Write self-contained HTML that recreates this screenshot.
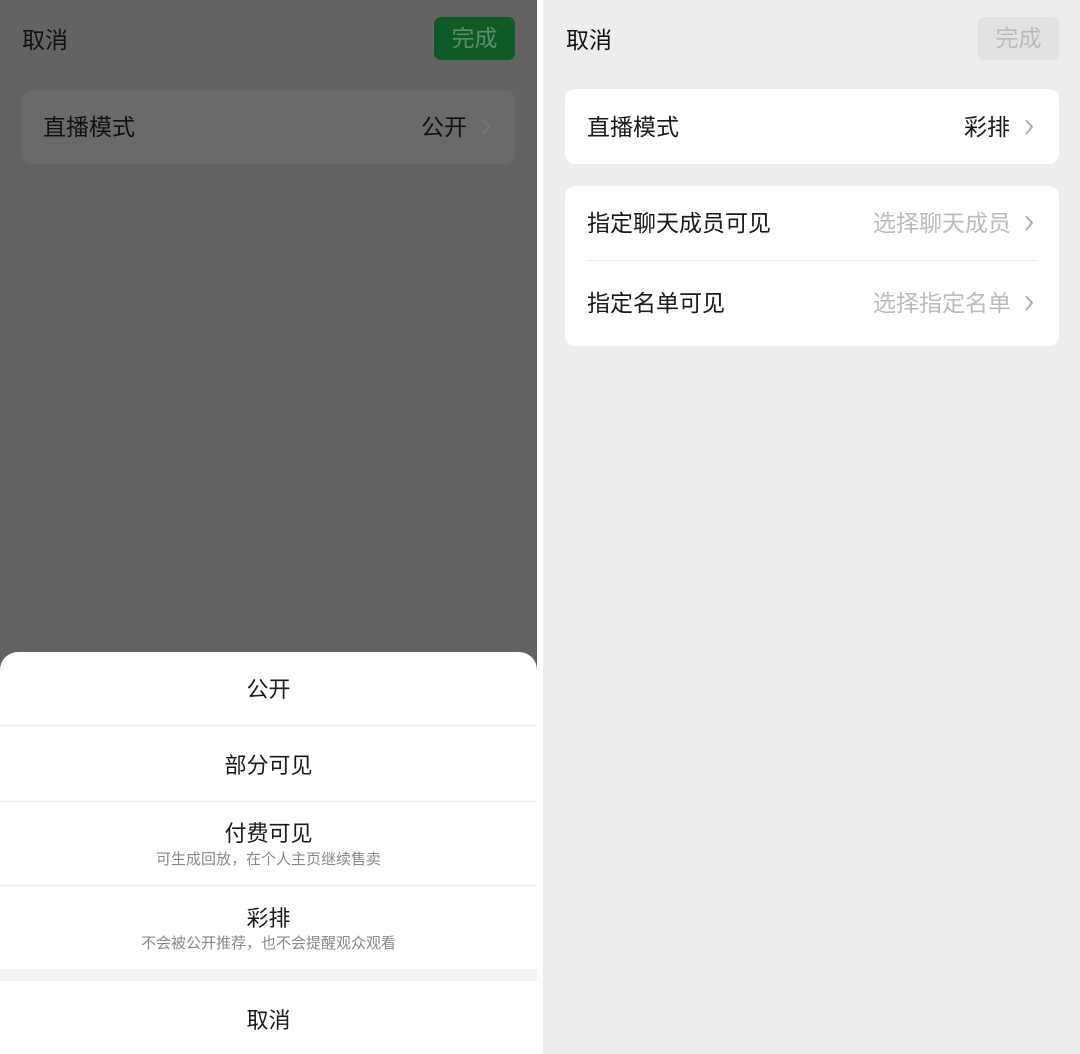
<!DOCTYPE html>
<html><head><meta charset="utf-8"><style>
*{margin:0;padding:0;box-sizing:border-box}
body{width:1080px;height:1054px;overflow:hidden;position:relative;background:#fff;font-family:"Liberation Sans","Noto Sans CJK SC",sans-serif;color:#1a1a1a}
.l{position:absolute;left:0;top:0;width:537px;height:1054px;background:#636363}
.r{position:absolute;left:543px;top:0;width:537px;height:1054px;background:#ededed}
.abs{position:absolute}
.t{font-size:23px;white-space:nowrap;line-height:26px}
.chev{position:absolute;width:16px;height:16px}
.sheet{position:absolute;left:0;top:652px;width:537px;height:402px;background:#fff;border-radius:18px 18px 0 0}
.it{position:absolute;left:0;width:537px;text-align:center}
.sep{position:absolute;left:0;width:537px;height:1px;background:#eee}
.sub{font-size:15px;color:#888;line-height:18px}
</style></head><body>
<div class="l">
 <div class="abs t" style="left:22px;top:27px;color:#111">取消</div>
 <div class="abs" style="left:434px;top:17px;width:81px;height:43px;background:#0f5a26;border-radius:7px;color:#5b8f68;font-size:23px;text-align:center;line-height:43px">完成</div>
 <div class="abs" style="left:22px;top:90px;width:493px;height:74px;background:#6a6a6a;border-radius:10px"></div>
 <div class="abs t" style="left:43px;top:114px;color:#111">直播模式</div>
 <div class="abs t" style="left:421px;top:114px;color:#111">公开</div>
 <svg class="chev" style="left:478px;top:119px" viewBox="0 0 16 16"><path d="M5 1 L11 8 L5 15" fill="none" stroke="#777" stroke-width="1.8"/></svg>
</div>
<div class="sheet">
 <div class="it t" style="top:25px;font-size:22px">公开</div>
 <div class="sep" style="top:73px"></div>
 <div class="it t" style="top:101px;font-size:22px">部分可见</div>
 <div class="sep" style="top:149px"></div>
 <div class="it t" style="top:169px;font-size:22px">付费可见</div>
 <div class="it sub" style="top:199px">可生成回放，在个人主页继续售卖</div>
 <div class="sep" style="top:233px"></div>
 <div class="it t" style="top:254px;font-size:22px">彩排</div>
 <div class="it sub" style="top:283px">不会被公开推荐，也不会提醒观众观看</div>
 <div class="abs" style="left:0;top:317px;width:537px;height:12px;background:#f4f4f4"></div>
 <div class="it t" style="top:356px;font-size:22px">取消</div>
</div>
<div class="r">
 <div class="abs t" style="left:23px;top:27px;color:#111">取消</div>
 <div class="abs" style="left:435px;top:17px;width:81px;height:43px;background:#e2e2e2;border-radius:7px;color:#bbb;font-size:23px;text-align:center;line-height:43px">完成</div>
 <div class="abs" style="left:22px;top:89px;width:494px;height:75px;background:#fff;border-radius:10px"></div>
 <div class="abs t" style="left:44px;top:114px">直播模式</div>
 <div class="abs t" style="left:421px;top:114px">彩排</div>
 <svg class="chev" style="left:478px;top:119px" viewBox="0 0 16 16"><path d="M5 1 L11 8 L5 15" fill="none" stroke="#aaa" stroke-width="1.8"/></svg>
 <div class="abs" style="left:22px;top:186px;width:494px;height:160px;background:#fff;border-radius:10px"></div>
 <div class="abs t" style="left:44px;top:210px">指定聊天成员可见</div>
 <div class="abs t" style="left:330px;top:210px;color:#bbb">选择聊天成员</div>
 <svg class="chev" style="left:478px;top:215px" viewBox="0 0 16 16"><path d="M5 1 L11 8 L5 15" fill="none" stroke="#aaa" stroke-width="1.8"/></svg>
 <div class="abs" style="left:44px;top:260px;width:450px;height:1px;background:#eee"></div>
 <div class="abs t" style="left:44px;top:290px">指定名单可见</div>
 <div class="abs t" style="left:330px;top:290px;color:#bbb">选择指定名单</div>
 <svg class="chev" style="left:478px;top:295px" viewBox="0 0 16 16"><path d="M5 1 L11 8 L5 15" fill="none" stroke="#aaa" stroke-width="1.8"/></svg>
</div>
</body></html>
